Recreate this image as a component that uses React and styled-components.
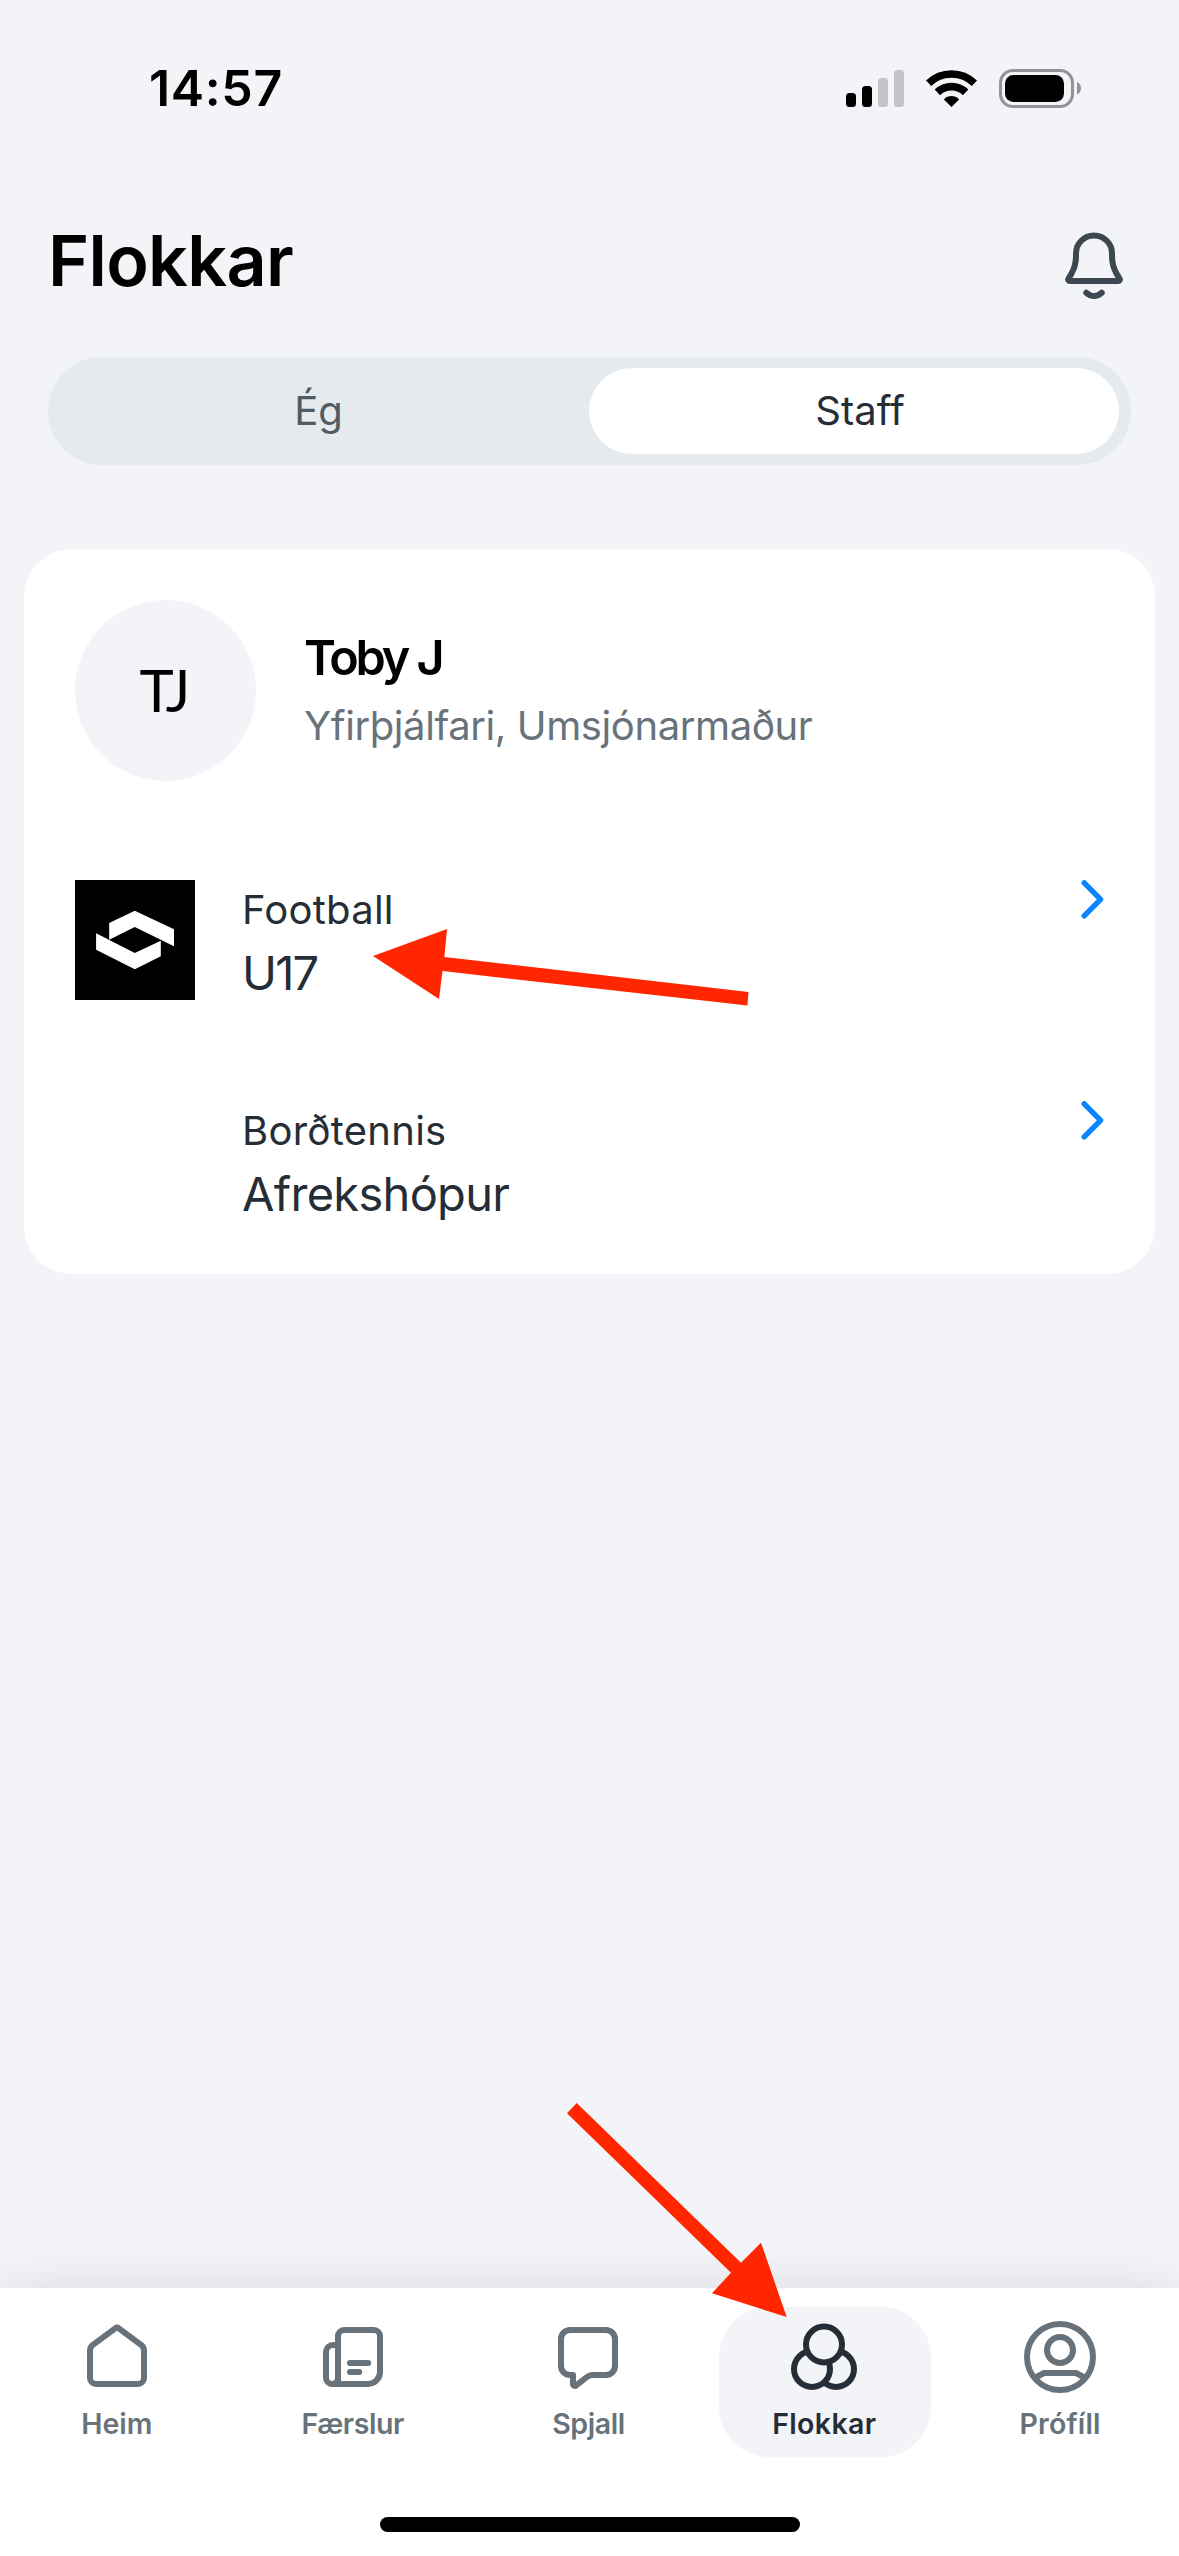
import React from "react";
import styled, { createGlobalStyle } from "styled-components";

const GlobalStyle = createGlobalStyle`
  * {
    box-sizing: border-box;
  }
  body {
    margin: 0;
    background: #f2f4f8;
    font-family: Inter, "Liberation Sans", sans-serif;
  }
  p, h1, h2 {
    margin: 0;
  }
`;

const Screen = styled.div`
  position: relative;
  display: flex;
  flex-direction: column;
  width: 1179px;
  height: 2556px;
  overflow: hidden;
  background: #f2f4f8;
`;

const StatusBar = styled.div`
  display: flex;
  justify-content: space-between;
  align-items: center;
  height: 176px;
  padding: 0 98px 0 149px;
`;

const Time = styled.p`
  font-size: 50px;
  font-weight: 600;
  letter-spacing: 0.65px;
  line-height: 60px;
  color: #000000;
`;

const StatusIcons = styled.div`
  display: flex;
  align-items: center;
  svg {
    display: block;
  }
`;

const Signal = styled.svg`
  margin-right: 22px;
`;

const Wifi = styled.svg`
  margin-right: 22px;
`;

const Header = styled.header`
  display: flex;
  justify-content: space-between;
  align-items: center;
  height: 170px;
  padding: 0 49px 0 48px;
`;

const Title = styled.h1`
  font-size: 70px;
  font-weight: 600;
  letter-spacing: -0.67px;
  line-height: 86px;
  color: #000000;
`;

const BellButton = styled.div`
  width: 72px;
  height: 82px;
  padding-top: 10px;
  color: #3d474f;
`;

const Segments = styled.div`
  display: flex;
  height: 108px;
  margin: 11px 48px 0;
  padding: 11px 12px 11px 0;
  border-radius: 54px;
  background: #e5eaee;
`;

const Segment = styled.div`
  flex: ${({ $active }) => ($active ? "0 0 530px" : "1")};
  border-radius: 43px;
  background: ${({ $active }) => ($active ? "#ffffff" : "transparent")};
  color: ${({ $active }) => ($active ? "#252d36" : "#525b64")};
  padding-left: ${({ $active }) => ($active ? "12px" : "0")};
  font-size: 40px;
  line-height: 85px;
  text-align: center;
`;

const Card = styled.section`
  height: 725px;
  margin: 84px 24px 0;
  padding: 51px;
  border-radius: 48px;
  background: #ffffff;
`;

const Member = styled.div`
  display: flex;
  align-items: center;
  gap: 48px;
`;

const Avatar = styled.div`
  width: 181px;
  height: 181px;
  padding-right: 5px;
  border-radius: 50%;
  background: #f2f4f8;
  color: #000000;
  font-family: Lato, sans-serif;
  font-size: 58px;
  letter-spacing: -4px;
  line-height: 179px;
  text-align: center;
`;

const MemberName = styled.h2`
  font-size: 48.5px;
  font-weight: 600;
  letter-spacing: -3.1px;
  line-height: 69px;
  color: #000000;
`;

const MemberRoles = styled.p`
  font-size: 40px;
  letter-spacing: -0.4px;
  line-height: 67px;
  color: #68727b;
`;

const TeamList = styled.div`
  display: flex;
  flex-direction: column;
  gap: 94px;
  margin-top: 99px;
`;

const TeamRow = styled.div`
  display: flex;
  height: 127px;
  color: #252d36;
`;

const TeamLogo = styled.div`
  width: 120px;
  height: 120px;
  margin-right: 47px;
  background: ${({ $filled }) => ($filled ? "#000000" : "transparent")};
`;

const TeamText = styled.div`
  flex: 1;
`;

const Sport = styled.p`
  font-size: 40px;
  letter-spacing: 0.25px;
  line-height: 59px;
`;

const TeamName = styled.p`
  font-size: 47px;
  letter-spacing: ${({ $spacing }) => $spacing}px;
  line-height: 68px;
`;

const Chevron = styled.svg`
  display: block;
  color: #0a84ff;
`;

const TabBar = styled.nav`
  height: 268px;
  margin-top: auto;
  padding-top: 19px;
  background: #ffffff;
  box-shadow: 0 0 45px rgba(0, 0, 0, 0.1);
`;

const Tabs = styled.div`
  display: flex;
`;

const Tab = styled.div`
  flex: 1;
  display: flex;
  justify-content: center;
`;

const TabPill = styled.div`
  display: flex;
  flex-direction: column;
  align-items: center;
  width: 212px;
  height: 150px;
  padding: 14px 2px 0 0;
  border-radius: 50px;
  background: ${({ $active }) => ($active ? "#f2f4f8" : "transparent")};
  color: ${({ $active }) => ($active ? "#252d36" : "#68727b")};
  svg {
    display: block;
  }
`;

const TabLabel = styled.p`
  font-size: 28.5px;
  font-weight: 600;
  letter-spacing: ${({ $spacing }) => $spacing}px;
  line-height: 61px;
`;

const HomeIndicator = styled.div`
  width: 420px;
  height: 15px;
  margin: 60px auto 0;
  border-radius: 8px;
  background: #000000;
`;

const Arrow = styled.svg`
  position: absolute;
  left: ${({ $left }) => $left}px;
  top: ${({ $top }) => $top}px;
  fill: #ff2600;
`;

const Icon = ({ children }) => (
  <svg
    width="72"
    height="72"
    viewBox="0 0 72 72"
    fill="none"
    stroke="currentColor"
    strokeWidth="6"
    strokeLinecap="round"
    strokeLinejoin="round"
  >
    {children}
  </svg>
);

const BellIcon = () => (
  <Icon>
    <path d="M36 5.5c10 0 18 8 18 18v2.5c0 6 1.4 12 4.4 17.4l3.2 5.4c.6 1-.1 2.2-1.3 2.2H11.7c-1.2 0-1.9-1.2-1.3-2.2l3.2-5.4C16.6 38 18 32 18 26v-2.5c0-10 8-18 18-18Z" />
    <path d="M28.3 62.8c4.6 4.2 10.8 4.2 15.4 0" />
  </Icon>
);

const HomeIcon = () => (
  <Icon>
    <path d="M9 29.6c0-2.3 1.1-4.4 2.9-5.7L34.2 7.3a3 3 0 0 1 3.6 0l22.3 16.6c1.8 1.3 2.9 3.4 2.9 5.7V57a6 6 0 0 1-6 6H15a6 6 0 0 1-6-6Z" />
  </Icon>
);

const NewsIcon = () => (
  <Icon>
    <path d="M21 63V15a6 6 0 0 1 6-6h30a6 6 0 0 1 6 6v36a12 12 0 0 1-12 12H15a6 6 0 0 1-6-6V31a7 7 0 0 1 7-7h5" />
    <path d="M15 63a6 6 0 0 0 6-6" />
    <path d="M33 42h18.2M33 51h9.2" />
  </Icon>
);

const ChatIcon = () => (
  <Icon>
    <path d="M9 18a9 9 0 0 1 9-9h36a9 9 0 0 1 9 9v27a9 9 0 0 1-9 9H40.5c-2.200 0-4 .7-5.600 2L24.200 64.400c-1.200 1-3.200.2-3.200-1.500V54h-3a9 9 0 0 1-9-9Z" />
  </Icon>
);

// circles are stacked, the ones in front hide the lines behind
const GroupsIcon = () => (
  <Icon>
    <g fill="#f2f4f8">
      <circle cx="48" cy="48" r="18" />
      <circle cx="24" cy="48" r="18" />
      <circle cx="36" cy="23.5" r="18" />
    </g>
  </Icon>
);

const ProfileIcon = () => (
  <Icon>
    <circle cx="36" cy="36" r="33" />
    <circle cx="36" cy="29" r="13" />
    <path d="M11.5 56.5 20 52h32l8.5 4.5" />
  </Icon>
);

const ClubLogo = () => (
  <svg width="120" height="120" viewBox="0 0 120 120" fill="#ffffff">
    <path d="M34.2 43 59.8 30.7 99 49.3V66.3L59.8 47 34.2 59.7Z" />
    <path d="M21.1 53.3 59.8 73 85.8 60.7V76.3L59.8 89.3 21.1 69.7Z" />
  </svg>
);

const teams = [
  { id: 1, sport: "Football", name: "U17", spacing: -1.8, logo: true },
  { id: 2, sport: "Borðtennis", name: "Afrekshópur", spacing: -0.7, logo: false },
];

const tabs = [
  { label: "Heim", spacing: 0, icon: <HomeIcon /> },
  { label: "Færslur", spacing: -0.45, icon: <NewsIcon /> },
  { label: "Spjall", spacing: -0.4, icon: <ChatIcon /> },
  { label: "Flokkar", spacing: 0.35, icon: <GroupsIcon />, active: true },
  { label: "Prófíll", spacing: 0.15, icon: <ProfileIcon /> },
];

const App = () => (
  <>
    <GlobalStyle />
    <Screen>
      <StatusBar>
        <Time>14:57</Time>
        <StatusIcons>
          <Signal width="58" height="37" viewBox="0 0 58 37">
            <rect x="0" y="23" width="10" height="14" rx="3.5" />
            <rect x="16" y="16" width="10" height="21" rx="3.5" />
            <rect x="32" y="8" width="10" height="29" rx="3.5" fill="#c3c4c6" />
            <rect x="48" y="0" width="10" height="37" rx="3.5" fill="#c3c4c6" />
          </Signal>
          <Wifi width="51" height="37" viewBox="0 0 51 37" fill="none" stroke="#000000">
            <path d="M2.6 13.3a33 33 0 0 1 45.8 0" strokeWidth="7.6" />
            <path d="M11.4 22.4a20.3 20.3 0 0 1 28.2 0" strokeWidth="7.8" />
            <path d="M25.5 37 17.9 29.4c4.2-4.4 11-4.4 15.2 0Z" fill="#000000" stroke="none" />
          </Wifi>
          <svg width="82" height="39" viewBox="0 0 82 39">
            <rect x="1.5" y="1.5" width="72" height="36" rx="12.5" fill="none" stroke="#929397" strokeWidth="3" />
            <rect x="6" y="6" width="59" height="27" rx="8.5" />
            <path d="M78 13v12.5c2.6-1 4-3.4 4-6.2S80.600 14 78 13Z" fill="#929397" />
          </svg>
        </StatusIcons>
      </StatusBar>

      <Header>
        <Title>Flokkar</Title>
        <BellButton>
          <BellIcon />
        </BellButton>
      </Header>

      <Segments>
        <Segment>Ég</Segment>
        <Segment $active>Staff</Segment>
      </Segments>

      <Card>
        <Member>
          <Avatar>TJ</Avatar>
          <div>
            <MemberName>Toby J</MemberName>
            <MemberRoles>Yfirþjálfari, Umsjónarmaður</MemberRoles>
          </div>
        </Member>
        <TeamList>
          {teams.map(({ id, sport, name, spacing, logo }) => (
            <TeamRow key={id}>
              <TeamLogo $filled={logo}>{logo && <ClubLogo />}</TeamLogo>
              <TeamText>
                <Sport>{sport}</Sport>
                <TeamName $spacing={spacing}>{name}</TeamName>
              </TeamText>
              <Chevron
                width="23"
                height="39"
                viewBox="0 0 23 39"
                fill="none"
                stroke="currentColor"
                strokeWidth="5.4"
                strokeLinecap="round"
                strokeLinejoin="round"
              >
                <path d="M3.2 2.8 19.6 19.3 3.2 35.9" />
              </Chevron>
            </TeamRow>
          ))}
        </TeamList>
      </Card>

      <TabBar>
        <Tabs>
          {tabs.map(({ label, spacing, icon, active }) => (
            <Tab key={label}>
              <TabPill $active={active}>
                {icon}
                <TabLabel $spacing={spacing}>{label}</TabLabel>
              </TabPill>
            </Tab>
          ))}
        </Tabs>
        <HomeIndicator />
      </TabBar>

      <Arrow $left={373} $top={929} width="376" height="77" viewBox="0 0 376 77">
        <path d="M0 27 74 0 71.4 28 375.5 63 374.4 76.5 69.5 42 66 70Z" />
      </Arrow>
      <Arrow $left={567} $top={2103} width="220" height="214" viewBox="0 0 220 214">
        <path d="M9.7 0 174 159.7 194 139.7 219.7 214 145 190.3 164 169.7 0 10.3Z" />
      </Arrow>
    </Screen>
  </>
);

export default App;
